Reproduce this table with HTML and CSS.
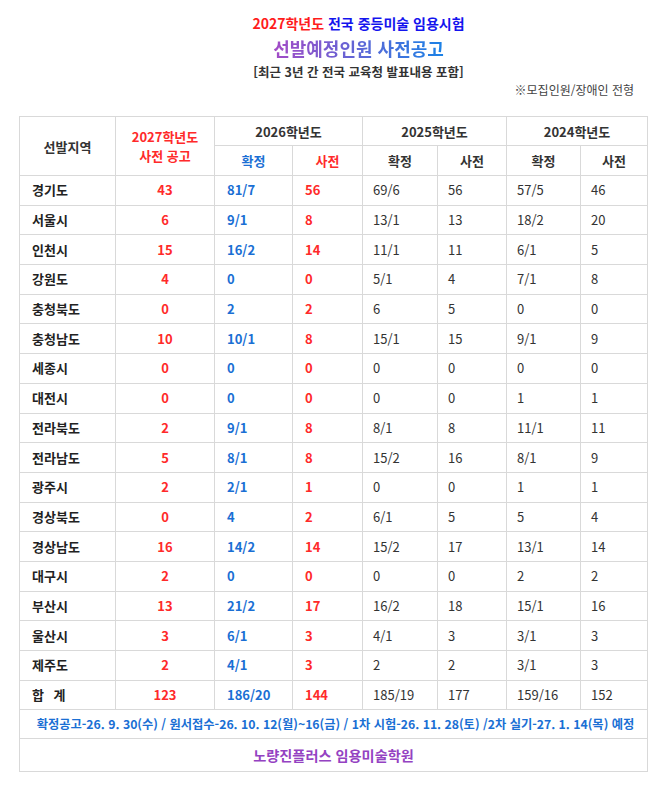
FILE: index.html
```html
<!DOCTYPE html>
<html lang="ko">
<head>
<meta charset="utf-8">
<title>2027학년도 전국 중등미술 임용시험 선발예정인원 사전공고</title>
<link rel="stylesheet" href="styles.css">
</head>
<body>
<div class="page">
  <header class="titles">
    <p class="t1"><span class="red">2027학년도</span> <span class="blue">전국 중등미술 임용시험</span></p>
    <p class="t2"><span class="grad">선발예정인원 사전공고</span></p>
    <p class="t3">[최근 3년 간 전국 교육청 발표내용 포함]</p>
  </header>
  <p class="note">※모집인원/장애인 전형</p>
  <table class="grid">
    <colgroup>
      <col class="c1"><col class="c2"><col class="c3"><col class="c4"><col class="c5"><col class="c6"><col class="c7"><col class="c8">
    </colgroup>
    <thead>
      <tr class="h1">
        <th rowspan="2" class="region-h">선발지역</th>
        <th rowspan="2" class="red">2027학년도<br>사전 공고</th>
        <th colspan="2">2026학년도</th>
        <th colspan="2">2025학년도</th>
        <th colspan="2">2024학년도</th>
      </tr>
      <tr class="h2">
        <th class="blue2">확정</th>
        <th class="red">사전</th>
        <th>확정</th>
        <th>사전</th>
        <th>확정</th>
        <th>사전</th>
      </tr>
    </thead>
    <tbody>
      <tr><td class="rg">경기도</td><td class="n27">43</td><td class="f26">81/7</td><td class="p26">56</td><td>69/6</td><td>56</td><td>57/5</td><td>46</td></tr>
      <tr><td class="rg">서울시</td><td class="n27">6</td><td class="f26">9/1</td><td class="p26">8</td><td>13/1</td><td>13</td><td>18/2</td><td>20</td></tr>
      <tr><td class="rg">인천시</td><td class="n27">15</td><td class="f26">16/2</td><td class="p26">14</td><td>11/1</td><td>11</td><td>6/1</td><td>5</td></tr>
      <tr><td class="rg">강원도</td><td class="n27">4</td><td class="f26">0</td><td class="p26">0</td><td>5/1</td><td>4</td><td>7/1</td><td>8</td></tr>
      <tr><td class="rg">충청북도</td><td class="n27">0</td><td class="f26">2</td><td class="p26">2</td><td>6</td><td>5</td><td>0</td><td>0</td></tr>
      <tr><td class="rg">충청남도</td><td class="n27">10</td><td class="f26">10/1</td><td class="p26">8</td><td>15/1</td><td>15</td><td>9/1</td><td>9</td></tr>
      <tr><td class="rg">세종시</td><td class="n27">0</td><td class="f26">0</td><td class="p26">0</td><td>0</td><td>0</td><td>0</td><td>0</td></tr>
      <tr><td class="rg">대전시</td><td class="n27">0</td><td class="f26">0</td><td class="p26">0</td><td>0</td><td>0</td><td>1</td><td>1</td></tr>
      <tr><td class="rg">전라북도</td><td class="n27">2</td><td class="f26">9/1</td><td class="p26">8</td><td>8/1</td><td>8</td><td>11/1</td><td>11</td></tr>
      <tr><td class="rg">전라남도</td><td class="n27">5</td><td class="f26">8/1</td><td class="p26">8</td><td>15/2</td><td>16</td><td>8/1</td><td>9</td></tr>
      <tr><td class="rg">광주시</td><td class="n27">2</td><td class="f26">2/1</td><td class="p26">1</td><td>0</td><td>0</td><td>1</td><td>1</td></tr>
      <tr><td class="rg">경상북도</td><td class="n27">0</td><td class="f26">4</td><td class="p26">2</td><td>6/1</td><td>5</td><td>5</td><td>4</td></tr>
      <tr><td class="rg">경상남도</td><td class="n27">16</td><td class="f26">14/2</td><td class="p26">14</td><td>15/2</td><td>17</td><td>13/1</td><td>14</td></tr>
      <tr><td class="rg">대구시</td><td class="n27">2</td><td class="f26">0</td><td class="p26">0</td><td>0</td><td>0</td><td>2</td><td>2</td></tr>
      <tr><td class="rg">부산시</td><td class="n27">13</td><td class="f26">21/2</td><td class="p26">17</td><td>16/2</td><td>18</td><td>15/1</td><td>16</td></tr>
      <tr><td class="rg">울산시</td><td class="n27">3</td><td class="f26">6/1</td><td class="p26">3</td><td>4/1</td><td>3</td><td>3/1</td><td>3</td></tr>
      <tr><td class="rg">제주도</td><td class="n27">2</td><td class="f26">4/1</td><td class="p26">3</td><td>2</td><td>2</td><td>3/1</td><td>3</td></tr>
      <tr><td class="rg sum">합 계</td><td class="n27">123</td><td class="f26">186/20</td><td class="p26">144</td><td>185/19</td><td>177</td><td>159/16</td><td>152</td></tr>
    </tbody>
    <tfoot>
      <tr class="sched"><td colspan="8">확정공고-26. 9. 30(수) / 원서접수-26. 10. 12(월)~16(금) / 1차 시험-26. 11. 28(토) /2차 실기-27. 1. 14(목) 예정</td></tr>
      <tr class="brand"><td colspan="8">노량진플러스 임용미술학원</td></tr>
    </tfoot>
  </table>
</div>
</body>
</html>
```

FILE: styles.css
```css
html, body {
  margin: 0;
  padding: 0;
  background: #ffffff;
}

body {
  font-family: "Noto Sans CJK KR", "Noto Sans", sans-serif;
  color: #333333;
}

.page {
  width: 666px;
  padding-top: 13px;
}

.titles {
  margin-left: 51px;
  text-align: center;
}

.titles p {
  margin: 0;
}

.t1 {
  font-size: 14px;
  font-weight: 700;
  line-height: 20px;
}

.t1 .red { color: #ff1c1c; }
.t1 .blue { color: #1414ee; }

.t2 {
  font-size: 18px;
  font-weight: 700;
  line-height: 30px;
}

.grad {
  background: linear-gradient(to right, #a44bc6, #1a82e6);
  -webkit-background-clip: text;
  background-clip: text;
  color: transparent;
}

.t3 {
  font-size: 12.5px;
  font-weight: 700;
  line-height: 18px;
  color: #333333;
}

.note {
  margin: 1px 0 0;
  padding-right: 32px;
  text-align: right;
  font-size: 12px;
  line-height: 16px;
  color: #444444;
}

.grid {
  margin: 18px 0 0 19px;
  border-collapse: collapse;
  table-layout: fixed;
  width: 628px;
  font-size: 13px;
}

.c1 { width: 96px; }
.c2 { width: 99px; }
.c3 { width: 78px; }
.c4 { width: 70px; }
.c5 { width: 75px; }
.c6 { width: 69px; }
.c7 { width: 74px; }
.c8 { width: 67px; }

.grid th,
.grid td {
  border: 1px solid #d9d9d9;
  padding: 0;
}

.grid th {
  font-weight: 700;
  text-align: center;
  color: #333333;
  line-height: 19px;
}

.h1 th { height: 28px; }
.h2 th { height: 29px; }

.grid th.red { color: #ff2a2a; }
.grid th.blue2 { color: #1a6fd4; }

.grid td {
  height: 28.7px;
  padding-left: 10px;
  line-height: 18px;
  color: #333333;
}

.grid td.rg {
  padding-left: 12px;
  font-weight: 700;
  color: #222222;
}

.grid td.sum {
  word-spacing: 6px;
}

.grid td.n27 {
  padding-left: 0;
  text-align: center;
  font-weight: 700;
  color: #ff2a2a;
}

.grid td.f26 {
  padding-left: 12px;
  font-weight: 700;
  color: #1a6fd4;
}

.grid td.p26 {
  padding-left: 12px;
  font-weight: 700;
  color: #ff2a2a;
}

.sched td {
  height: 27.6px;
  padding-left: 4px;
  text-align: center;
  font-weight: 700;
  font-size: 12.25px;
  white-space: nowrap;
  color: #1a6fd4;
}

.brand td {
  height: 32px;
  padding-left: 0;
  text-align: center;
  font-weight: 700;
  font-size: 14.2px;
  color: #9442c2;
}
```
